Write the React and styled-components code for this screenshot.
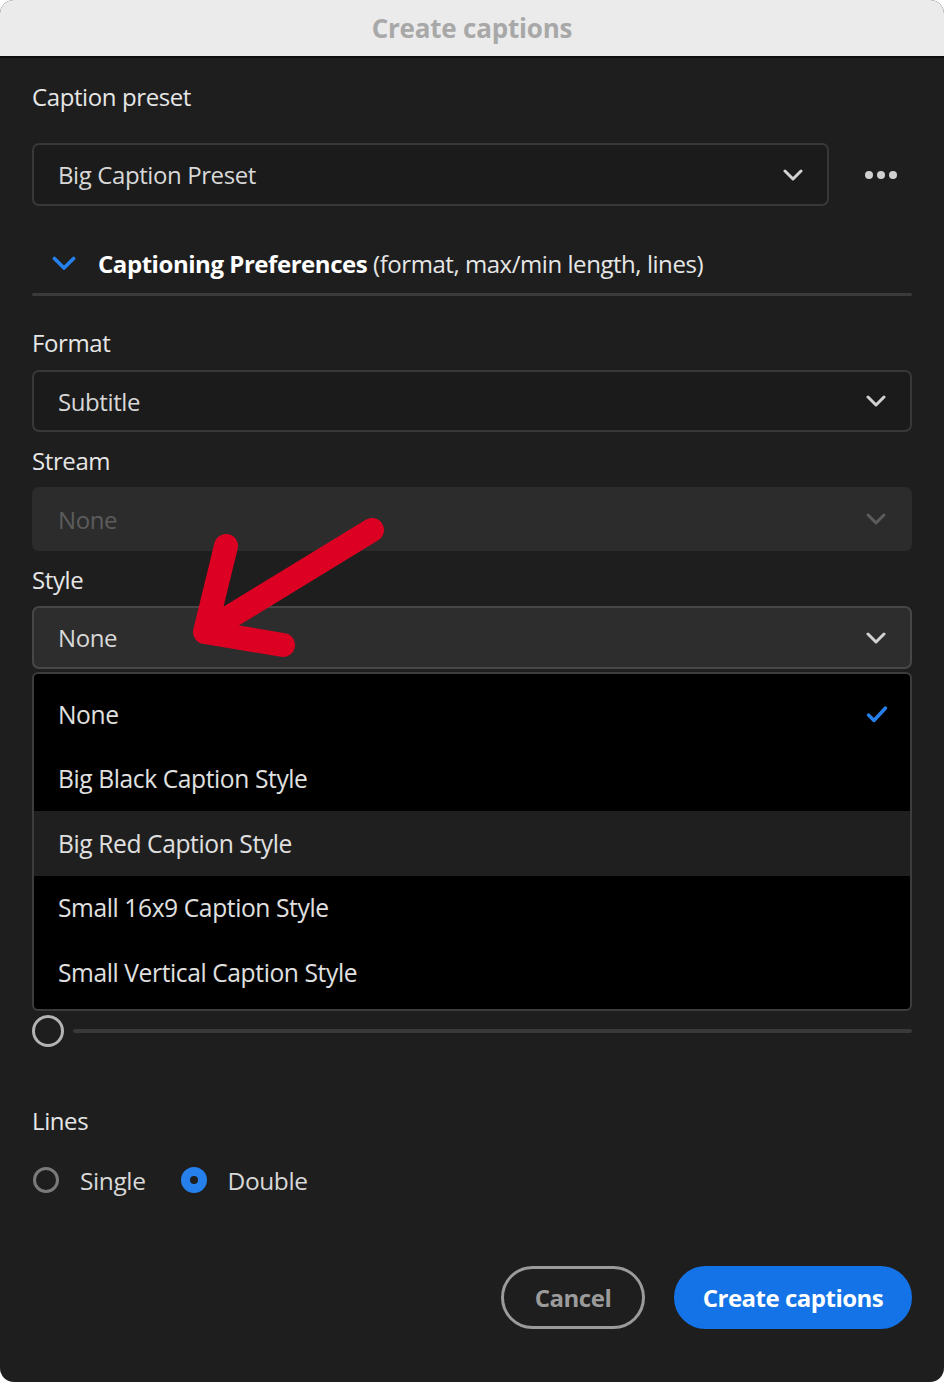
import React from 'react'
import styled, { createGlobalStyle } from 'styled-components'

const GlobalStyle = createGlobalStyle`
  body {
    margin: 0;
    background: #ffffff;
    font-family: "Open Sans", "Noto Sans", sans-serif;
  }
`

const Window = styled.div`
  position: relative;
  width: 944px;
  height: 1382px;
  border-radius: 14px;
  overflow: hidden;
  background: #1e1e1e;
  display: flex;
  flex-direction: column;
`

const TitleBar = styled.div`
  height: 56px;
  flex-shrink: 0;
  background: #ebebeb;
  border-bottom: 2px solid #101010;
  display: flex;
  align-items: center;
  justify-content: center;
  font-size: 26px;
  font-weight: 700;
  color: #a8a8a8;
  letter-spacing: -0.2px;
`

const Body = styled.div`
  padding: 19px 32px 0 32px;
  display: flex;
  flex-direction: column;
`

const Label = styled.div`
  flex-shrink: 0;
  height: 40px;
  line-height: 40px;
  font-size: 24px;
  color: #e6e6e6;
  margin-top: ${p => p.$top || 0}px;
  margin-bottom: ${p => p.$bottom ?? 6}px;
  letter-spacing: -0.4px;
`

const Select = styled.div`
  flex-shrink: 0;
  height: ${p => p.$h || 63}px;
  box-sizing: border-box;
  border-radius: 7px;
  border: 2px solid ${p => (p.$disabled ? 'transparent' : p.$open ? '#474747' : '#383838')};
  background: ${p => (p.$disabled ? '#2c2c2c' : p.$open ? '#2d2d2d' : '#1b1b1b')};
  display: flex;
  align-items: center;
  justify-content: space-between;
  padding: 0 24px 0 24px;
  font-size: 24px;
  letter-spacing: -0.4px;
  color: ${p => (p.$disabled ? '#5c5c5c' : '#d8d8d8')};
`

const PresetRow = styled.div`
  display: flex;
  align-items: center;
  gap: 36px;
  & > ${Select} {
    flex: 1;
  }
`

const More = styled.div`
  display: flex;
  gap: 4px;
  padding-right: 15px;
  span {
    width: 8px;
    height: 8px;
    border-radius: 50%;
    background: #d0d0d0;
  }
`

const PrefsRow = styled.div`
  height: 40px;
  margin-top: 37px;
  display: flex;
  align-items: center;
  gap: 22px;
  padding-left: 20px;
  font-size: 24px;
  letter-spacing: -0.45px;
  color: #e6e6e6;
  b {
    color: #ffffff;
    font-weight: 700;
  }
`

const Divider = styled.div`
  height: 3px;
  margin-top: 10px;
  background: #3b3b3b;
  border-radius: 2px;
`

const Menu = styled.div`
  margin-top: 3px;
  height: 339px;
  box-sizing: border-box;
  background: #000;
  border: 2px solid #3c3c3c;
  border-radius: 6px;
  padding: 8px 0;
`

const MenuItem = styled.div`
  height: 64.5px;
  display: flex;
  align-items: center;
  justify-content: space-between;
  padding: 0 22px 0 24px;
  font-size: 24.6px;
  letter-spacing: -0.4px;
  color: #e0e0e0;
  background: ${p => (p.$hover ? '#1f1f1f' : 'transparent')};
`

const SliderRow = styled.div`
  margin-top: 5px;
  height: 30px;
  display: flex;
  align-items: center;
  gap: 9px;
`

const Thumb = styled.div`
  width: 26px;
  height: 26px;
  border-radius: 50%;
  border: 3px solid #b3b3b3;
  flex-shrink: 0;
`

const Track = styled.div`
  flex: 1;
  height: 4px;
  border-radius: 2px;
  background: #393939;
`

const RadioRow = styled.div`
  margin-top: 24px;
  height: 30px;
  display: flex;
  align-items: center;
`

const RadioOption = styled.div`
  display: flex;
  align-items: center;
  gap: 21px;
  margin-right: 34px;
  font-size: 24.5px;
  letter-spacing: -0.4px;
  color: #d8d8d8;
`

const RadioDot = styled.div`
  width: 26px;
  height: 26px;
  box-sizing: border-box;
  border-radius: 50%;
  border: ${p => (p.$on ? '9px solid #2680eb' : '3px solid #7a7a7a')};
  background: ${p => (p.$on ? '#1e1e1e' : 'transparent')};
  margin-left: 1px;
`

const Footer = styled.div`
  margin-top: 71px;
  display: flex;
  justify-content: flex-end;
  gap: 29px;
`

const Button = styled.button`
  height: 63px;
  box-sizing: border-box;
  border-radius: 32px;
  font-family: inherit;
  font-size: 24px;
  font-weight: 700;
  letter-spacing: -0.5px;
  white-space: nowrap;
  padding: 0;
  border: 3px solid ${p => (p.$primary ? '#1473e6' : '#9b9b9b')};
  background: ${p => (p.$primary ? '#1473e6' : 'transparent')};
  color: ${p => (p.$primary ? '#ffffff' : '#9b9b9b')};
  width: ${p => (p.$primary ? 238 : 144)}px;
`

const Arrow = styled.svg`
  position: absolute;
  left: 0;
  top: 0;
  pointer-events: none;
`

const Chevron = ({ color = '#d2d2d2', size = 20 }) => (
  <svg width={size} height={size * 0.6} viewBox="0 0 20 12">
    <path d="M2 2 L10 10 L18 2" fill="none" stroke={color} strokeWidth="3" strokeLinecap="round" strokeLinejoin="round" />
  </svg>
)

const Check = () => (
  <svg width="22" height="18" viewBox="0 0 22 18">
    <path d="M2.5 10 L8 15.5 L19.5 3" fill="none" stroke="#2680eb" strokeWidth="3.4" strokeLinecap="round" strokeLinejoin="round" />
  </svg>
)

const styles = ['None', 'Big Black Caption Style', 'Big Red Caption Style', 'Small 16x9 Caption Style', 'Small Vertical Caption Style']

export default function App() {
  return (
    <>
      <GlobalStyle />
      <Window>
        <TitleBar>Create captions</TitleBar>
        <Body>
          <Label $bottom={26}>Caption preset</Label>
          <PresetRow>
            <Select>
              Big Caption Preset
              <Chevron />
            </Select>
            <More><span /><span /><span /></More>
          </PresetRow>

          <PrefsRow>
            <Chevron color="#2680eb" size={24} />
            <span><b>Captioning Preferences</b> (format, max/min length, lines)</span>
          </PrefsRow>
          <Divider />

          <Label $top={27} $bottom={7}>Format</Label>
          <Select $h={62}>
            Subtitle
            <Chevron />
          </Select>

          <Label $top={9}>Stream</Label>
          <Select $h={64} $disabled>
            None
            <Chevron color="#5c5c5c" />
          </Select>

          <Label $top={9}>Style</Label>
          <Select $open>
            None
            <Chevron />
          </Select>

          <Menu>
            {styles.map((s, i) => (
              <MenuItem key={s} $hover={i === 2}>
                {s}
                {i === 0 && <Check />}
              </MenuItem>
            ))}
          </Menu>

          <SliderRow>
            <Thumb />
            <Track />
          </SliderRow>

          <Label $top={55} $bottom={0}>Lines</Label>
          <RadioRow>
            <RadioOption><RadioDot />Single</RadioOption>
            <RadioOption><RadioDot $on />Double</RadioOption>
          </RadioRow>

          <Footer>
            <Button>Cancel</Button>
            <Button $primary>Create captions</Button>
          </Footer>
        </Body>

        <Arrow width="944" height="1382" viewBox="0 0 944 1382">
          <path
            d="M372 530 L205 632 M226 546 L205 632 L283 645"
            fill="none"
            stroke="#dc0022"
            strokeWidth="24"
            strokeLinecap="round"
            strokeLinejoin="round"
          />
        </Arrow>
      </Window>
    </>
  )
}
